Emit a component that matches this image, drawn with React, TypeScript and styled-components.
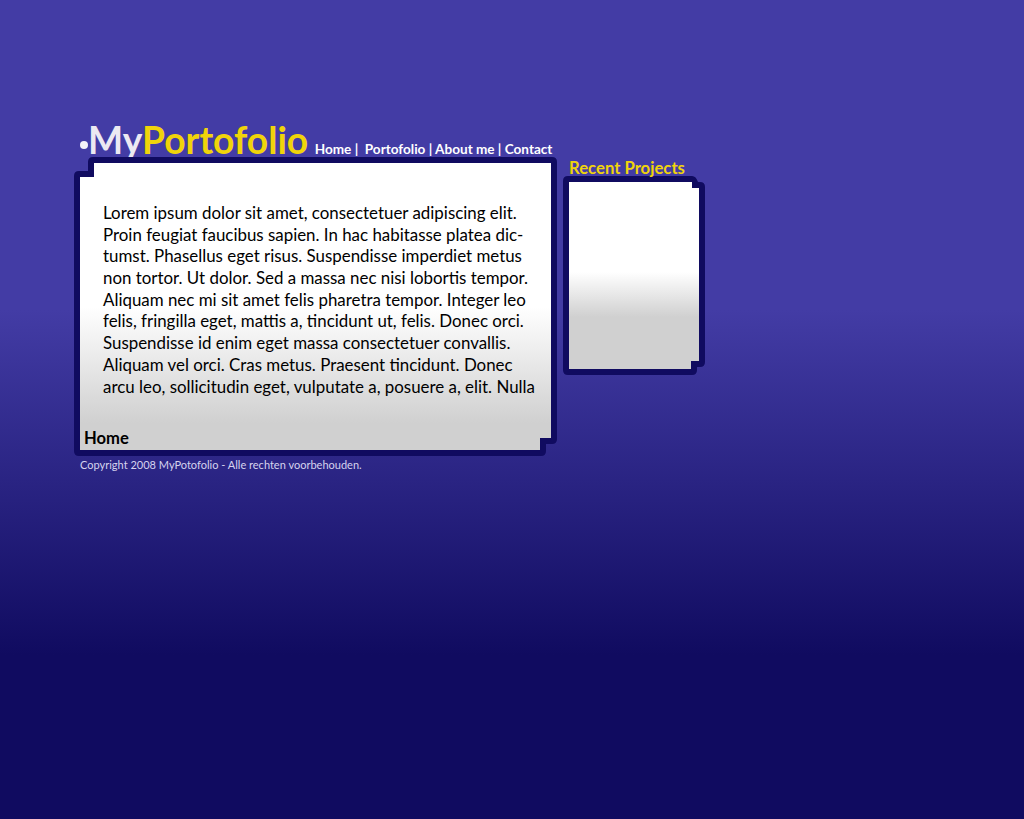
import React from "react";
import styled, { createGlobalStyle } from "styled-components";

const Global = createGlobalStyle`
  html, body { margin: 0; padding: 0; height: 819px; overflow: hidden; }
  body {
    font-family: Lato, "Open Sans", sans-serif;
    background: linear-gradient(180deg, #433ca5 0px, #433ca5 310px, #100b60 655px, #100b60 819px);
  }
`;

const Page = styled.div`
  width: 1024px;
  height: 819px;
  padding: 121px 0 0 74px;
  box-sizing: border-box;
  display: flex;
  align-items: flex-start;
  gap: 6px;
`;

const MainColumn = styled.div`
  width: 483px;
  display: flex;
  flex-direction: column;
`;

const Header = styled.header`
  height: 36px;
  display: flex;
  align-items: flex-end;
  white-space: nowrap;
`;

const Logo = styled.h1`
  margin: 0 0 -1px 6px;
  font-size: 37.2px;
  line-height: 36px;
  font-weight: 700;
  color: #f0d40a;
  letter-spacing: 0;
`;

const Dot = styled.span`
  display: inline-block;
  width: 8px;
  height: 8px;
  margin: 0 0 5px 0;
  border-radius: 50%;
  background: #f4f2f8;
`;

const My = styled.span`
  color: #ece9f2;
`;

const Nav = styled.nav`
  margin: 0 0 0 6.5px;
  font-size: 13.57px;
  line-height: 16px;
  font-weight: 700;
  color: #fff;
  white-space: pre;
`;

const Outline = styled.section<{ $clip: string; $w: number; $h: number }>`
  width: ${(p) => p.$w}px;
  height: ${(p) => p.$h}px;
  padding: 6px;
  box-sizing: border-box;
  background: #100b60;
  clip-path: path("${(p) => p.$clip}");
`;

const Sheet = styled.div<{ $clip: string; $from: number; $to: number }>`
  width: 100%;
  height: 100%;
  box-sizing: border-box;
  background: linear-gradient(180deg, #fff ${(p) => p.$from}px, #d0d0d0 ${(p) => p.$to}px);
  clip-path: polygon(${(p) => p.$clip});
  display: flex;
  flex-direction: column;
`;

const Body = styled.p`
  margin: 0;
  padding: 38.9px 0 0 23px;
  flex: 1;
  font-size: 16.9px;
  line-height: 21.72px;
  color: #000;
  white-space: nowrap;
`;

const Crumb = styled.div`
  padding: 0 0 2px 4px;
  font-size: 16.6px;
  line-height: 20px;
  font-weight: 700;
  color: #000;
`;

const Copyright = styled.footer`
  margin: 2px 0 0 6px;
  font-size: 11.03px;
  line-height: 14px;
  color: #d6d3ee;
`;

const Side = styled.aside`
  width: 142px;
  padding-top: 36px;
  display: flex;
  flex-direction: column;
`;

const SideTitle = styled.h2`
  position: relative;
  z-index: 1;
  margin: 0 0 0 6px;
  height: 19px;
  font-size: 16.7px;
  line-height: 22px;
  font-weight: 700;
  color: #f0d40a;
  white-space: nowrap;
`;

const lines = [
  "Lorem ipsum dolor sit amet, consectetuer adipiscing elit.",
  "Proin feugiat faucibus sapien. In hac habitasse platea dic-",
  "tumst. Phasellus eget risus. Suspendisse imperdiet metus",
  "non tortor. Ut dolor. Sed a massa nec nisi lobortis tempor.",
  "Aliquam nec mi sit amet felis pharetra tempor. Integer leo",
  "felis, fringilla eget, mattis a, tincidunt ut, felis. Donec orci.",
  "Suspendisse id enim eget massa consectetuer convallis.",
  "Aliquam vel orci. Cras metus. Praesent tincidunt. Donec",
  "arcu leo, sollicitudin eget, vulputate a, posuere a, elit. Nulla",
];

const mainOuter =
  "M19 0H478Q483 0 483 5V282Q483 287 478 287H472V294Q472 299 467 299H5Q0 299 0 294V19Q0 14 5 14H14V5Q14 0 19 0Z";
const sideOuter =
  "M5 0H129Q133 0 135 6H137Q142 6 142 11V186Q142 191 137 191H134V194Q134 199 129 199H5Q0 199 0 194V5Q0 0 5 0Z";

export default function App() {
  return (
    <>
      <Global />
      <Page>
        <MainColumn>
          <Header>
            <Logo>
              <Dot />
              <My>My</My>Portofolio
            </Logo>
            <Nav>{"Home |  Portofolio | About me | Contact"}</Nav>
          </Header>
          <Outline $w={483} $h={299} $clip={mainOuter}>
            <Sheet
              $from={144}
              $to={260}
              $clip="14px 0, 471px 0, 471px 275px, 460px 275px, 460px 287px, 0 287px, 0 14px, 14px 14px"
            >
              <Body>
                {lines.map((l) => (
                  <React.Fragment key={l}>
                    {l}
                    <br />
                  </React.Fragment>
                ))}
              </Body>
              <Crumb>Home</Crumb>
            </Sheet>
          </Outline>
          <Copyright>Copyright 2008 MyPotofolio - Alle rechten voorbehouden.</Copyright>
        </MainColumn>
        <Side>
          <SideTitle>Recent Projects</SideTitle>
          <Outline $w={142} $h={199} $clip={sideOuter}>
            <Sheet
              $from={90}
              $to={135}
              $clip="0 0, 123px 0, 123px 6px, 130px 6px, 130px 179px, 122px 179px, 122px 187px, 0 187px"
            />
          </Outline>
        </Side>
      </Page>
    </>
  );
}
